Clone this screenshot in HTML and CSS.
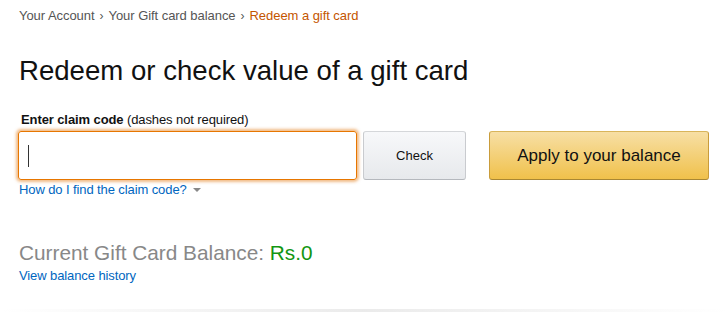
FILE: index.html
```html
<!DOCTYPE html>
<html>
<head>
<meta charset="utf-8">
<link rel="stylesheet" href="styles.css">
</head>
<body>
<div class="page">
  <nav class="crumbs">
    <a class="crumb">Your Account</a>
    <span class="sep">›</span>
    <a class="crumb">Your Gift card balance</a>
    <span class="sep">›</span>
    <span class="crumb current">Redeem a gift card</span>
  </nav>
  <h1 class="title">Redeem or check value of a gift card</h1>
  <div class="label"><b>Enter claim code</b> (dashes not required)</div>
  <div class="form-row">
    <div class="input"><span class="caret"></span></div>
    <button class="btn check">Check</button>
    <button class="btn apply">Apply to your balance</button>
  </div>
  <a class="link help">How do I find the claim code? <span class="tri"></span></a>
  <div class="balance">Current Gift Card Balance: <span class="amount">Rs.0</span></div>
  <a class="link history">View balance history</a>
</div>
<div class="divider"></div>
</body>
</html>
```
FILE: styles.css
```css
html, body { margin: 0; padding: 0; background: #fff; }
body { font-family: "Liberation Sans", Arial, sans-serif; color: #111; width: 728px; height: 312px; position: relative; overflow: hidden; }
.page { padding: 7px 19px 0 19px; display: flex; flex-direction: column; align-items: flex-start; }
.crumbs { font-size: 13px; line-height: 18px; color: #555; display: flex; gap: 5px; letter-spacing: -0.05px; }
.crumb { color: #555; }
.sep { color: #555; font-size: 12px; }
.current { color: #c45500; }
.title { font-size: 27.6px; font-weight: 400; margin: 28px 0 0 0; line-height: 36px; color: #111; }
.label { font-size: 13px; line-height: 19px; margin-top: 21px; padding-left: 2px; color: #111; letter-spacing: -0.1px; }
.label b { font-weight: 700; }
.form-row { display: flex; margin-top: 2px; margin-left: -1px; }
.input { box-sizing: border-box; width: 339px; height: 49px; border: 1px solid #e77600; border-radius: 3px; box-shadow: 0 0 3px 2px rgba(228,121,17,.5); display: flex; align-items: center; padding-left: 9px; }
.caret { width: 1px; height: 22px; background: #333; }
.btn { box-sizing: border-box; height: 49px; border-radius: 3px; font-family: inherit; color: #111; padding: 0; cursor: pointer; }
.check { width: 103px; margin-left: 6px; font-size: 13px; border: 1px solid #c9cbcf; border-color: #d5d7da #c9cbcf #b5b8bd; background: linear-gradient(to bottom, #f7f8fa, #e7e9ec); }
.apply { width: 220px; margin-left: 23px; font-size: 17px; border: 1px solid; border-color: #d9b55b #c99c3b #a88734; background: linear-gradient(to bottom, #f7dfa5, #f0c14b); }
.link { color: #0066c0; font-size: 13px; line-height: 17px; letter-spacing: -0.1px; }
.help { margin-top: 1px; display: flex; align-items: center; gap: 6px; }
.tri { width: 0; height: 0; border-left: 4px solid transparent; border-right: 4px solid transparent; border-top: 4px solid #888; margin-top: 1px; }
.balance { margin-top: 42px; font-size: 20.8px; line-height: 26px; color: #888; }
.amount { color: #129612; }
.history { margin-top: 1px; }
.divider { position: absolute; left: 0; right: 0; top: 309px; height: 3px; background: linear-gradient(to right, rgba(255,255,255,0), rgba(210,210,210,.45) 50%, rgba(255,255,255,0)); }
```
